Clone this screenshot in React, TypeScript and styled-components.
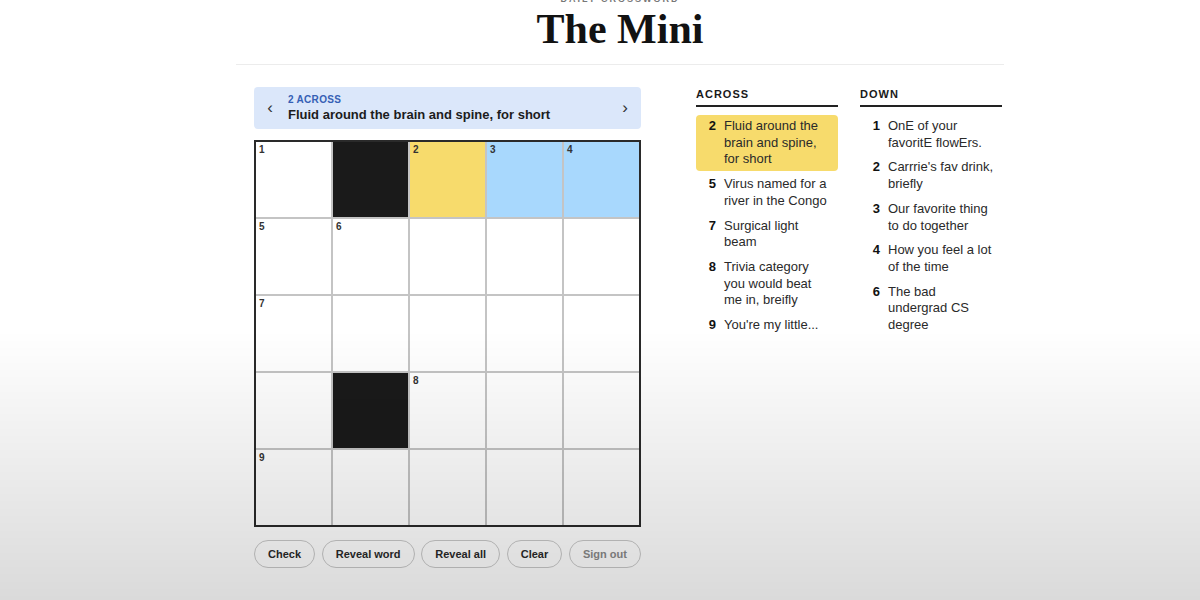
import styled, { createGlobalStyle } from "styled-components"

const GlobalStyle = createGlobalStyle`
  html, body {
    margin: 0;
    padding: 0;
    background: #ffffff;
    font-family: "Liberation Sans", Arial, sans-serif;
    color: #222222;
  }
`

const Shade = styled.div`
  position: fixed;
  inset: 0;
  pointer-events: none;
  background: linear-gradient(to bottom, rgba(0, 0, 0, 0) 55%, rgba(0, 0, 0, 0.145) 100%);
`

const Page = styled.div`
  width: 1200px;
  height: 600px;
  padding-left: 40px;
  box-sizing: border-box;
  overflow: hidden;
`

const Container = styled.main`
  width: 768px;
  margin: 0 auto;
`

const Header = styled.header`
  margin-top: -7px;
  text-align: center;
  padding-bottom: 11px;
  border-bottom: 1px solid #ececec;
`

const Kicker = styled.div`
  font-size: 9px;
  line-height: 12px;
  font-weight: 700;
  letter-spacing: 2px;
  color: #777777;
  text-transform: uppercase;
`

const Title = styled.h1`
  margin: 0;
  font-family: "Liberation Serif", "Times New Roman", serif;
  font-size: 42px;
  line-height: 48px;
  font-weight: 700;
  color: #121212;
`

const Body = styled.div`
  display: flex;
  gap: 55px;
  padding: 22px 0 0 18px;
`

const Board = styled.section`
  width: 387px;
  display: flex;
  flex-direction: column;
`

const ClueBar = styled.div`
  height: 42px;
  display: flex;
  align-items: center;
  gap: 14px;
  padding: 0 12px;
  background: #dbe7fa;
  border-radius: 4px;
`

const Chevron = styled.span`
  font-size: 17px;
  line-height: 1;
  color: #333333;
  width: 8px;
  text-align: center;
  margin-top: -2px;
`

const ClueText = styled.div`
  flex: 1;
  display: flex;
  flex-direction: column;
`

const ClueLabel = styled.span`
  font-size: 10px;
  line-height: 12px;
  font-weight: 700;
  letter-spacing: 0.3px;
  color: #3560b5;
`

const ClueMain = styled.span`
  font-size: 13px;
  line-height: 17px;
  font-weight: 700;
  color: #1c1c1c;
`

const Grid = styled.div`
  margin-top: 11px;
  display: grid;
  grid-template-columns: repeat(5, 75px);
  grid-template-rows: repeat(5, 75px);
  gap: 2px;
  background: #c4c4c4;
  border: 2px solid #2a2a2a;
`

const Cell = styled.div<{ $tone: "white" | "black" | "yellow" | "blue" }>`
  position: relative;
  background: ${(p) =>
    p.$tone === "black"
      ? "#1a1a1a"
      : p.$tone === "yellow"
        ? "#f7db6c"
        : p.$tone === "blue"
          ? "#a8d8fd"
          : "#ffffff"};
`

const CellNum = styled.span`
  position: absolute;
  top: 2px;
  left: 3px;
  font-size: 10px;
  line-height: 12px;
  font-weight: 700;
  color: #333333;
`

const Buttons = styled.div`
  margin-top: 13px;
  display: flex;
  justify-content: space-between;
`

const Pill = styled.button<{ $muted?: boolean }>`
  height: 28px;
  padding: 0 13px;
  border: 1px solid #c9c9c9;
  border-radius: 14px;
  background: transparent;
  font-family: "Liberation Sans", Arial, sans-serif;
  font-size: 11px;
  font-weight: 700;
  color: ${(p) => (p.$muted ? "#8a8a8a" : "#2a2a2a")};
`

const Clues = styled.div`
  display: flex;
  gap: 22px;
`

const ClueColumn = styled.section`
  width: 142px;
`

const ColumnTitle = styled.h3`
  margin: 0;
  font-size: 11px;
  line-height: 14px;
  font-weight: 700;
  letter-spacing: 1px;
  color: #1a1a1a;
  padding-bottom: 4px;
  border-bottom: 2px solid #222222;
`

const List = styled.ol`
  list-style: none;
  margin: 8px 0 0;
  padding: 0;
`

const Item = styled.li<{ $active?: boolean }>`
  display: flex;
  gap: 8px;
  padding: 3px 8px;
  margin-bottom: 2px;
  border-radius: 4px;
  font-size: 13px;
  line-height: 16.7px;
  color: #2a2a2a;
  background: ${(p) => (p.$active ? "#f7db6c" : "transparent")};
`

const ItemNum = styled.span`
  width: 12px;
  flex-shrink: 0;
  text-align: right;
  font-weight: 700;
  color: #111111;
`

type Tone = "white" | "black" | "yellow" | "blue"

const cells: { tone: Tone; num?: number }[] = [
  { tone: "white", num: 1 },
  { tone: "black" },
  { tone: "yellow", num: 2 },
  { tone: "blue", num: 3 },
  { tone: "blue", num: 4 },
  { tone: "white", num: 5 },
  { tone: "white", num: 6 },
  { tone: "white" },
  { tone: "white" },
  { tone: "white" },
  { tone: "white", num: 7 },
  { tone: "white" },
  { tone: "white" },
  { tone: "white" },
  { tone: "white" },
  { tone: "white" },
  { tone: "black" },
  { tone: "white", num: 8 },
  { tone: "white" },
  { tone: "white" },
  { tone: "white", num: 9 },
  { tone: "white" },
  { tone: "white" },
  { tone: "white" },
  { tone: "white" },
]

const across = [
  { n: 2, text: "Fluid around the brain and spine, for short", active: true },
  { n: 5, text: "Virus named for a river in the Congo" },
  { n: 7, text: "Surgical light beam" },
  { n: 8, text: "Trivia category you would beat me in, breifly" },
  { n: 9, text: "You're my little..." },
]

const down = [
  { n: 1, text: "OnE of your favoritE flowErs." },
  { n: 2, text: "Carrrie's fav drink, briefly" },
  { n: 3, text: "Our favorite thing to do together" },
  { n: 4, text: "How you feel a lot of the time" },
  { n: 6, text: "The bad undergrad CS degree" },
]

export default function App(): JSX.Element {
  return (
    <>
      <GlobalStyle />
      <Page>
        <Container>
          <Header>
            <Kicker>Daily Crossword</Kicker>
            <Title>The Mini</Title>
          </Header>

          <Body>
            <Board>
              <ClueBar>
                <Chevron>‹</Chevron>
                <ClueText>
                  <ClueLabel>2 ACROSS</ClueLabel>
                  <ClueMain>Fluid around the brain and spine, for short</ClueMain>
                </ClueText>
                <Chevron>›</Chevron>
              </ClueBar>

              <Grid>
                {cells.map((c, i) => (
                  <Cell key={i} $tone={c.tone}>
                    {c.num && <CellNum>{c.num}</CellNum>}
                  </Cell>
                ))}
              </Grid>

              <Buttons>
                <Pill>Check</Pill>
                <Pill>Reveal word</Pill>
                <Pill>Reveal all</Pill>
                <Pill>Clear</Pill>
                <Pill $muted>Sign out</Pill>
              </Buttons>
            </Board>

            <Clues>
              <ClueColumn>
                <ColumnTitle>ACROSS</ColumnTitle>
                <List>
                  {across.map((c) => (
                    <Item key={c.n} $active={c.active}>
                      <ItemNum>{c.n}</ItemNum>
                      <span>{c.text}</span>
                    </Item>
                  ))}
                </List>
              </ClueColumn>
              <ClueColumn>
                <ColumnTitle>DOWN</ColumnTitle>
                <List>
                  {down.map((c) => (
                    <Item key={c.n}>
                      <ItemNum>{c.n}</ItemNum>
                      <span>{c.text}</span>
                    </Item>
                  ))}
                </List>
              </ClueColumn>
            </Clues>
          </Body>
        </Container>
      </Page>
      <Shade />
    </>
  )
}
